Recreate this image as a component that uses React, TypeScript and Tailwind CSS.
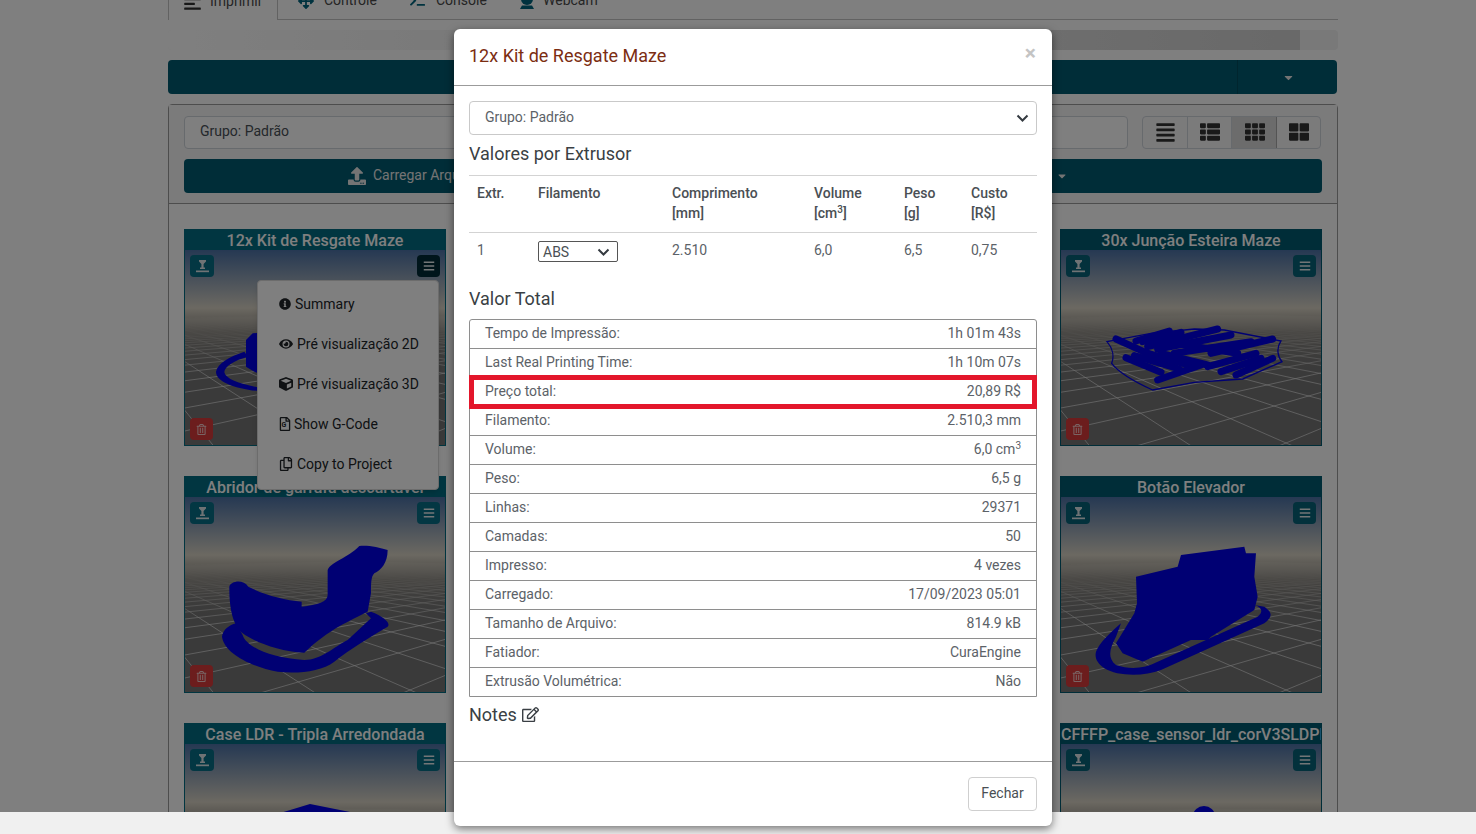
import React from "react";
import {
  FaInfoCircle, FaEye, FaCube, FaRegFile, FaRegCopy, FaRegEdit, FaUpload, FaBars, FaRegTrashAlt,
  FaAlignJustify, FaAlignLeft, FaThList, FaTh, FaThLarge, FaCaretDown, FaTerminal, FaArrowsAlt,
} from "react-icons/fa";

function PrintIcon({ color = "#dfe7ea" }: { color?: string }) {
  return (
    <svg width="15" height="15" viewBox="0 0 15 15" fill={color}>
      <path d="M4 1h7v1.6L8.6 5v3.4h1.4V10H5V8.4h1.4V5L4 2.6z" />
      <rect x="1" y="11.5" width="13" height="1.7" />
    </svg>
  );
}

function WebcamIcon() {
  return (
    <svg width="16" height="16" viewBox="0 0 16 16" fill="#00657e">
      <circle cx="8" cy="6" r="6" />
      <path d="M3 12.5h10L15 16H1z" />
    </svg>
  );
}

function gridLines() {
  const a = 0.62;
  const s = 0.6;
  const out: string[] = [];
  const proj = (x: number, y: number) => {
    const X = x * Math.cos(a) - y * Math.sin(a);
    const Z = x * Math.sin(a) + y * Math.cos(a) + 3.2;
    return [X, Z];
  };
  const seg = (x0: number, y0: number, x1: number, y1: number) => {
    let [X0, Z0] = proj(x0, y0);
    let [X1, Z1] = proj(x1, y1);
    const near = 0.5;
    if (Z0 < near && Z1 < near) return;
    if (Z0 < near) {
      const t = (near - Z0) / (Z1 - Z0);
      X0 += (X1 - X0) * t;
      Z0 = near;
    }
    if (Z1 < near) {
      const t = (near - Z1) / (Z0 - Z1);
      X1 += (X0 - X1) * t;
      Z1 = near;
    }
    out.push(
      `M${(131 + (300 * X0) / Z0).toFixed(1)} ${(58 + 300 / Z0).toFixed(1)}L${(131 + (300 * X1) / Z1).toFixed(1)} ${(58 + 300 / Z1).toFixed(1)}`,
    );
  };
  for (let i = -42; i <= 42; i++) {
    seg(i * s, -30, i * s, 30);
    seg(-30, i * s, 30, i * s);
  }
  return out.join("");
}
const GRID = gridLines();

function Kit() {
  return (
    <g transform="translate(-14 -25) scale(.3333)" fill="#0000e6">
      <path d="M135 440 C140 415 175 395 220 380 L232 395 C190 405 160 425 160 442 C165 465 215 480 280 490 L280 500 C210 495 135 475 135 440Z" />
      <path d="M225 345 L245 325 L300 320 L300 460 L250 440 L225 425Z" />
    </g>
  );
}
function Junction() {
  const bars = [
    "M195 342 L290 385", "M255 348 L355 318", "M275 350 L390 322", "M290 365 L500 312", "M320 372 L540 330", "M370 385 L600 350",
    "M225 398 L330 442", "M250 392 L385 432", "M280 382 L430 425", "M320 465 L450 420", "M330 385 L470 420",
    "M470 425 L615 385", "M510 440 L630 400", "M555 450 L665 400", "M480 385 L665 342", "M400 360 L560 385",
  ];
  return (
    <g transform="translate(-10 -25) scale(.3333)" fill="none" stroke="#0000e6" strokeLinecap="round">
      <path strokeWidth="4" d="M168 350 L300 325 L430 312 L520 315 L690 348 C675 370 680 395 693 410 L575 462 L430 472 L305 495 C250 470 205 445 182 415 C190 395 185 370 168 350Z" />
      {bars.map((d) => (
        <path key={d} d={d} strokeWidth="21" />
      ))}
    </g>
  );
}
function Opener() {
  return (
    <g transform="translate(-14 -27) scale(.3333)" fill="#0000e6">
      <path d="M153 500 C155 480 175 465 195 460 L215 495 C225 530 300 565 400 570 C450 570 490 530 530 510 L600 445 L585 430 L600 425 C640 440 660 460 650 470 C600 500 540 535 490 575 C450 605 380 612 320 605 C240 590 160 550 153 500Z" />
      <path d="M175 350 C178 335 215 325 232 350 C280 375 340 390 392 395 L392 410 C440 405 470 395 470 375 L470 300 C480 275 530 265 565 228 C590 225 625 232 650 240 C650 280 630 300 610 310 C600 320 600 340 600 370 L590 425 C540 450 470 480 400 548 C320 545 240 510 215 490 C180 460 175 400 175 350Z" />
    </g>
  );
}
function Button() {
  return (
    <g transform="translate(-10 -27) scale(.3333)" fill="#0000e6">
      <path d="M135 545 C145 520 175 490 210 460 L195 500 C180 530 165 560 195 585 C240 600 280 595 320 575 L620 440 C640 425 630 410 610 405 L640 410 C670 430 660 445 640 460 L330 600 C280 620 200 620 160 595 C140 580 130 565 135 545Z" />
      <path d="M255 320 L380 290 L390 255 L580 230 L585 250 L615 250 L610 320 L620 380 L610 420 L480 500 L470 510 L420 510 L275 575 L215 550 L195 520 L250 430 L258 400Z" />
    </g>
  );
}
function Case() {
  return <path d="M92 70 L125 60 L165 68 L170 90 L90 90Z" fill="#0000e6" />;
}
function Cap() {
  return <ellipse cx="143" cy="72" rx="11" ry="10" fill="#0000e6" />;
}

function Scene({ children }: { children?: React.ReactNode }) {
  return (
    <svg viewBox="0 0 260 196" width="260" height="196" className="block">
      <defs>
        <linearGradient id="sky" x1="0" y1="0" x2="0" y2="1">
          <stop offset="0" stopColor="#4c72a6" />
          <stop offset="1" stopColor="#d8d2c4" />
        </linearGradient>
        <linearGradient id="fade" x1="0" y1="0" x2="0" y2="1">
          <stop offset="0" stopColor="#d8d2c4" />
          <stop offset="0.35" stopColor="#8f8b84" stopOpacity="0.85" />
          <stop offset="1" stopColor="#747474" stopOpacity="0" />
        </linearGradient>
      </defs>
      <rect width="260" height="58" fill="url(#sky)" />
      <rect y="58" width="260" height="138" fill="#747474" />
      <path d={GRID} stroke="#f2f2f2" strokeWidth="0.7" strokeOpacity="0.85" fill="none" />
      <rect y="58" width="260" height="70" fill="url(#fade)" />
      {children}
    </svg>
  );
}

function Card({ title, active, right, children }: { title: string; active?: boolean; right?: boolean; children?: React.ReactNode }) {
  const btn = right ? "bg-[#066278]" : "bg-[#066e86]";
  return (
    <div className={`w-[262px] h-[217px] border overflow-hidden ${right ? "border-[#005a70] bg-[#005a70]" : "border-[#026c82] bg-[#026c82]"}`}>
      <div className="h-[20px] leading-[22px] text-center whitespace-nowrap overflow-hidden text-white text-[16px] font-medium">
        {title}
      </div>
      <div className="relative h-[196px] w-[260px] overflow-hidden">
        <Scene>{children}</Scene>
        <div className={`absolute left-[5px] top-[5px] w-[24px] h-[22px] rounded flex items-center justify-center ${btn}`}>
          <PrintIcon />
        </div>
        <div
          className={`absolute right-[5px] top-[5px] w-[23px] h-[22px] rounded flex items-center justify-center text-[#e6ecee] ${active ? "bg-[#002a36]" : btn}`}
        >
          <FaBars size={12} />
        </div>
        <div className="absolute left-[5px] bottom-[6px] w-[23px] h-[22px] rounded bg-[#d83a3a] flex items-center justify-center text-[#f3c9c9]">
          <FaRegTrashAlt size={11} />
        </div>
      </div>
    </div>
  );
}

const totals: [React.ReactNode, React.ReactNode][] = [
  ["Tempo de Impressão:", "1h 01m 43s"],
  ["Last Real Printing Time:", "1h 10m 07s"],
  ["Preço total:", "20,89 R$"],
  ["Filamento:", "2.510,3 mm"],
  ["Volume:", <>6,0 cm<sup className="text-[10px] -top-[5px] relative align-baseline">3</sup></>],
  ["Peso:", "6,5 g"],
  ["Linhas:", "29371"],
  ["Camadas:", "50"],
  ["Impresso:", "4 vezes"],
  ["Carregado:", "17/09/2023 05:01"],
  ["Tamanho de Arquivo:", "814.9 kB"],
  ["Fatiador:", "CuraEngine"],
  ["Extrusão Volumétrica:", "Não"],
];

function Chevron() {
  return (
    <svg width="13" height="8" viewBox="0 0 13 8" fill="none" stroke="#343a40" strokeWidth="2">
      <path d="M1.5 1.5l5 5 5-5" />
    </svg>
  );
}

const menu: [React.ReactNode, string][] = [
  [<FaInfoCircle size={12} />, "Summary"],
  [<FaEye size={14} />, "Pré visualização 2D"],
  [<FaCube size={14} />, "Pré visualização 3D"],
  [
    <span className="relative inline-flex w-[11px] justify-center">
      <FaRegFile size={14} className="shrink-0" />
      <span className="absolute left-[2.5px] top-[4px] text-[7px] leading-[9px] font-bold">G</span>
    </span>,
    "Show G-Code",
  ],
  [<FaRegCopy size={14} />, "Copy to Project"],
];

export default function App() {
  return (
    <div className="relative h-[834px] w-full overflow-hidden bg-[#f0f0f0] text-[14px]" style={{ fontFamily: "Roboto, 'Liberation Sans', sans-serif" }}>
      <div className="relative h-[812px] overflow-hidden bg-white">
        <div className="ml-[168px] w-[1170px] -mt-[18px]">
          {/* tabs */}
          <div className="flex h-[38px] border-b border-[#c4c4c4] text-[#4a4a4a]">
            <div className="w-[110px] h-[38px] border border-b-0 border-[#c4c4c4] bg-white rounded-t flex items-center gap-2 pl-[14px]">
              <FaAlignLeft size={19} className="text-[#333]" /> Imprimir
            </div>
            <div className="flex items-center gap-[10px] pl-[20px] w-[132px]">
              <FaArrowsAlt size={16} className="text-[#00657e]" /> Controle
            </div>
            <div className="flex items-center gap-[11px] w-[109px]">
              <FaTerminal size={15} className="text-[#00657e]" /> Console
            </div>
            <div className="flex items-center gap-2">
              <WebcamIcon /> Webcam
            </div>
          </div>
          {/* progress */}
          <div className="mt-[10px] h-[20px] rounded bg-[#f3f3f3] overflow-hidden">
            <div className="h-full w-[1132px] bg-gradient-to-r from-[#ffffff] to-[#d2d2d2]" />
          </div>
          {/* main action */}
          <div className="mt-[10px] h-[34px] w-[1169px] rounded bg-[#005a70] flex">
            <div className="flex-1 border-r border-[#004a5d]" />
            <div className="w-[99px] flex items-center justify-center pl-[2px] text-[#e6e6e6]">
              <FaCaretDown size={13} />
            </div>
          </div>
          {/* files panel */}
          <div className="mt-[10px] border border-[#9a9a9a] rounded">
            <div className="px-[15px] pt-[11px] pb-[10px] border-b border-[#9a9a9a] bg-[#f7f7f7]">
              <div className="flex justify-between items-center">
                <div className="w-[944px] h-[33px] rounded border border-[#ced4da] bg-white flex items-center pl-[15px] pb-[2px] text-[#495057]">
                  Grupo: Padrão
                </div>
                <div className="flex h-[33px] w-[179px] rounded border border-[#ced4da] text-[#333] mr-[1px]">
                  <div className="flex-1 flex items-center justify-center pl-[2px] pb-[1px] border-r border-[#ced4da]"><FaAlignJustify size={21} /></div>
                  <div className="flex-1 flex items-center justify-center pl-[2px] pb-[1px] border-r border-[#ced4da]"><FaThList size={20} /></div>
                  <div className="flex-1 flex items-center justify-center pl-[2px] pb-[1px] border-r border-[#a8a8a8] bg-[#d8d8d8]"><FaTh size={20} /></div>
                  <div className="flex-1 flex items-center justify-center pl-[2px] pb-[1px]"><FaThLarge size={20} /></div>
                </div>
              </div>
              <div className="mt-[10px] h-[34px] rounded bg-[#005a70] flex items-center justify-between pl-[164px] pr-[254px] pb-[1px] text-[#e8e8e8]">
                <span className="flex items-center gap-[7px]"><FaUpload size={18} /> Carregar Arquivo</span>
                <span className="flex items-center gap-1">Novo Projeto <FaCaretDown size={12} /></span>
              </div>
            </div>
            <div className="px-[15px] pt-[25px] flex flex-col gap-[30px] h-[700px] bg-white">
              <div className="flex justify-between">
                <Card title="12x Kit de Resgate Maze" active><Kit /></Card>
                <Card title="30x Junção Esteira Maze" right><Junction /></Card>
              </div>
              <div className="flex justify-between">
                <Card title="Abridor de garrafa descartável"><Opener /></Card>
                <Card title="Botão Elevador" right><Button /></Card>
              </div>
              <div className="flex justify-between">
                <Card title="Case LDR - Tripla Arredondada"><Case /></Card>
                <Card title="CFFFP_case_sensor_ldr_corV3SLDPRT" right><Cap /></Card>
              </div>
            </div>
          </div>
        </div>
        {/* card context menu */}
        <div className="absolute left-[257px] top-[280px] w-[182px] h-[210px] pt-[3px] rounded bg-white border border-[#d8d8d8] shadow-md flex flex-col text-[#212529]">
          {menu.map(([icon, label]) => (
            <div key={label} className="h-[40px] shrink-0 flex items-center gap-[4px] pl-[21px]">
              {icon}
              <span>{label}</span>
            </div>
          ))}
        </div>
        <div className="absolute inset-0 bg-black/50" />
      </div>

      {/* modal */}
      <div className="absolute left-[454px] top-[29px] w-[598px] h-[797px] rounded-md bg-white shadow-[0_3px_9px_rgba(0,0,0,0.5)] flex flex-col text-[#5c6268]">
        <div className="h-[57px] shrink-0 border-b border-[#9b9b9b] flex items-center justify-between pl-[15px] pr-[16px]">
          <span className="text-[18px] text-[#7c2d12] pb-[4px]">12x Kit de Resgate Maze</span>
          <span className="text-[21px] font-bold text-[#c4c4c4] leading-none pb-[8px]">×</span>
        </div>
        <div className="flex-1 px-[15px] pt-[15px]">
          <div className="h-[34px] rounded border border-[#c9c9c9] flex items-center justify-between pl-[15px] pr-[7px]">
            <span className="pb-[2px]">Grupo: Padrão</span>
            <Chevron />
          </div>
          <div className="mt-[8px] h-[24px] leading-[22px] text-[18px] text-[#3a3f44]">Valores por Extrusor</div>
          <div className="mt-[8px] border-t border-[#d3d3d3]">
            <div className="grid grid-cols-[61px_134px_142px_90px_67px_1fr] pl-[8px] h-[57px] border-b border-[#d3d3d3] pt-[7px] font-medium text-[#4a4f54] leading-[20px]">
              <div>Extr.</div>
              <div>Filamento</div>
              <div>Comprimento<br />[mm]</div>
              <div>Volume<br />[cm<sup className="text-[10px] relative -top-[5px] align-baseline">3</sup>]</div>
              <div>Peso<br />[g]</div>
              <div>Custo<br />[R$]</div>
            </div>
            <div className="grid grid-cols-[61px_134px_142px_90px_67px_1fr] pl-[8px] h-[42px] pt-[7px] leading-[20px]">
              <div>1</div>
              <div>
                <div className="w-[80px] h-[21px] mt-[1px] border border-[#555] rounded-[2px] flex items-center justify-between pl-[4px] pr-[7px] text-[#4a4f54]">
                  ABS <Chevron />
                </div>
              </div>
              <div>2.510</div>
              <div>6,0</div>
              <div>6,5</div>
              <div>0,75</div>
            </div>
          </div>
          <div className="mt-[12px] h-[24px] leading-[24px] text-[18px] text-[#3a3f44]">Valor Total</div>
          <div className="mt-[8px] border border-[#8e8e8e] rounded-t-[3px]">
            {totals.map(([k, v], i) => (
              <div key={i} className={`relative flex items-center justify-between px-[15px] pb-[2px] ${i < totals.length - 1 ? "h-[29px] border-b border-[#8e8e8e]" : "h-[28px]"}`}>
                <span>{k}</span>
                <span>{v}</span>
                {i === 2 && <div className="absolute -left-[1px] -right-[1px] -top-[3px] -bottom-[3px] border-[5px] border-[#e3162b]" />}
              </div>
            ))}
          </div>
          <div className="mt-[5px] h-[24px] flex items-center gap-[5px] text-[18px] text-[#3a3f44]">
            Notes <FaRegEdit size={17} />
          </div>
        </div>
        <div className="h-[65px] shrink-0 border-t border-[#9b9b9b] flex items-start justify-end pt-[15px] pr-[15px]">
          <div className="w-[69px] h-[34px] rounded border border-[#cfcfcf] flex items-center justify-center pb-[2px] text-[#4a4f54]">Fechar</div>
        </div>
      </div>
    </div>
  );
}
